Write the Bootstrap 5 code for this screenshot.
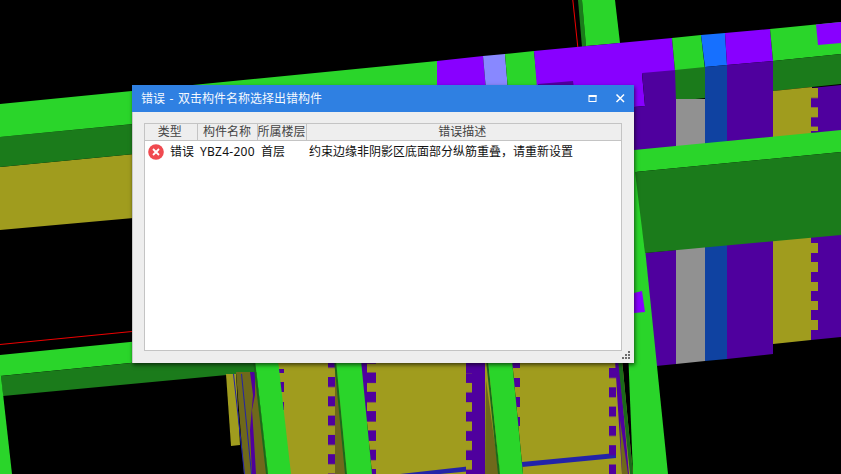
<!DOCTYPE html>
<html lang="zh-CN">

<head>
    <meta charset="UTF-8">
    <meta name="viewport" content="width=device-width, initial-scale=1.0">
    <title>错误</title>
    <link href="https://cdn.jsdelivr.net/npm/bootstrap@5.3.0/dist/css/bootstrap.min.css" rel="stylesheet">
    <style>
        html, body { height: 100%; }
        body { background: #000; overflow: hidden; font-family: "Noto Sans", "Noto Sans CJK SC", sans-serif; font-size: 12px; color: #111; }
        .scene { position: absolute; left: 0; top: 0; }
        .err-window { position: absolute; left: 132px; top: 85px; width: 502px; height: 278px; background: #eee; border-left: 1px solid #c8c8c8; box-shadow: 1px 2px 4px rgba(0,0,0,.6); }
        .err-title { height: 27px; margin-left: -1px; padding: 0 6px 0 9px; background: #2f80e2; color: #f4f8fe; word-spacing: 1.5px; }
        .err-btn { width: 14px; height: 14px; margin-left: 14px; }
        .err-body { padding: 11px 12px 12px 11px; height: 251px; }
        .err-grid { height: 228px; width: 478px; border: 1px solid #c4c4c4; background: #fff; }
        .err-table { table-layout: fixed; width: 100%; margin: 0; --bs-table-bg: transparent; --bs-table-color: #111; }
        .err-table th { height: 16px; padding: 0; background: #eee; color: #444; font-weight: 400; line-height: 16px; text-align: center; border-bottom: 1px solid #c4c4c4; border-right: 1px solid #c4c4c4; white-space: nowrap; overflow: hidden; }
        .err-table th:first-child { padding-right: 2px; }
        .err-table th:last-child { border-right: 0; padding-right: 3px; }
        .err-table td { height: 22px; padding: 0; line-height: 21px; border: 0; white-space: nowrap; }
        .err-type { gap: 6px; }
        .cell-type { padding-left: 3px !important; }
        .cell-name { padding-left: 3px !important; letter-spacing: .25px; }
        .cell-floor { padding-left: 4px !important; }
        .cell-desc { padding-left: 3px !important; }
        .err-grip { position: absolute; right: 3px; bottom: 3px; }
    </style>
</head>

<body>
    <!-- 3D model behind the dialog -->
    <svg class="scene" width="841" height="474" viewBox="0 0 841 474">
        <defs>
            <pattern id="notch-a" x="328" y="377" width="10" height="19.3" patternUnits="userSpaceOnUse"><rect width="10" height="10" fill="#4f009e"/></pattern>
            <pattern id="notch-b" x="367" y="372.5" width="10" height="19.3" patternUnits="userSpaceOnUse"><rect width="10" height="10.5" fill="#4f009e"/></pattern>
            <pattern id="notch-c" x="466" y="363.6" width="10" height="19.3" patternUnits="userSpaceOnUse"><rect width="10" height="9.5" fill="#a09c1e"/></pattern>
            <pattern id="notch-d" x="609" y="368" width="10" height="19.3" patternUnits="userSpaceOnUse"><rect width="10" height="10" fill="#4f009e"/></pattern>
            <pattern id="notch-e" x="811" y="88" width="10" height="19.3" patternUnits="userSpaceOnUse"><rect width="10" height="10" fill="#a09c1e"/></pattern>
        </defs>

        <!-- upper left beam -->
        <polygon fill="#a09c1e" points="0,167 300,138 300,203 0,230"/>
        <polygon fill="#1b7b1b" points="0,137 300,108 300,138 0,167"/>
        <polygon fill="#2ad52a" points="0,104 437,61 440,94 0,137"/>

        <!-- short beam at the top -->
        <polygon fill="#1b7b1b" points="578,0 582,0 586,46 582,47"/>
        <polygon fill="#2ad52a" points="582,0 615,0 620,43 586,46"/>
        <polygon fill="#ee0000" points="572.3,0 573.3,0 578.3,47 577.3,47"/>

        <!-- strip along the top edge -->
        <polygon fill="#8800ff" points="437,61 483,56 486,90 437,90"/>
        <polygon fill="#8888ff" points="483,56 505,54 508,90 486,90"/>
        <polygon fill="#2ad52a" points="505,54 534,51 538,90 508,90"/>
        <polygon fill="#8800ff" points="534,51 672,38 675,71 642,74 645,106 634,107 538,100"/>
        <polygon fill="#2ad52a" points="672,38 701,35 705,70 675,71"/>
        <polygon fill="#1670ff" points="701,35 725,33 727,65 705,67"/>
        <polygon fill="#8800ff" points="725,33 770,29 773,61 727,65"/>
        <polygon fill="#2ad52a" points="770,29 841,22 841,54 773,61"/>
        <polygon fill="#8800ff" points="816,24.5 841,22 841,43 818,45"/>
        <polygon fill="#4f009e" points="538,84 573,81 574,88 539,90"/>

        <!-- right block, upper part -->
        <polygon fill="#4f009e" points="642,73 676,70 676,150 634,150 634,107 645,106"/>
        <polygon fill="#1b7b1b" points="675,70 705,67 705,98 676,101"/>
        <polygon fill="#0f42a1" points="705,67 727,65 727,145 705,145"/>
        <rect x="676" y="99" width="29" height="50" fill="#919191"/>
        <polygon fill="#4f009e" points="727,65 773,61 773,140 727,145"/>
        <polygon fill="#1b7b1b" points="773,61 841,54 841,84 773,91"/>
        <polygon fill="#a09c1e" points="773,91 812,87 811,140 773,140"/>
        <polygon fill="#4f009e" points="811,88 841,85 841,131 811,133"/>
        <rect x="811" y="88" width="7" height="43" fill="url(#notch-e)"/>

        <!-- right block, lower part -->
        <polygon fill="#4f009e" points="645,253 676,250 676,364 656,366"/>
        <polygon fill="#919191" points="676,248 705,245 705,361 676,364"/>
        <polygon fill="#0f42a1" points="705,245 727,243 727,359 705,361"/>
        <polygon fill="#4f009e" points="727,243 773,238 773,354 727,359"/>
        <polygon fill="#a09c1e" points="773,238 811,234 811,340 773,344"/>
        <polygon fill="#4f009e" points="811,234 841,231 841,337 811,340"/>
        <g fill="#a09c1e">
            <rect x="811" y="243" width="7" height="10"/>
            <rect x="811" y="262" width="7" height="10"/>
            <rect x="811" y="282" width="7" height="9"/>
            <rect x="811" y="301" width="7" height="9"/>
            <rect x="811" y="320" width="7" height="10"/>
        </g>

        <!-- long green column on the right -->
        <polygon fill="#2ad52a" points="620,150 635,150 668,474 633,474"/>
        <polygon fill="#8800ff" points="634,293 642,291 645,312 634,313"/>

        <!-- cross beam on the right -->
        <polygon fill="#2ad52a" points="634,150 841,130 841,152 635,172"/>
        <polygon fill="#1b7b1b" points="635,172 841,152 841,235 645,253"/>

        <!-- lower left beam -->
        <polygon fill="#ee0000" points="0,344 132,331 132,332 0,345"/>
        <polygon fill="#2ad52a" points="0,355 140,341 140,362 0,376"/>
        <polygon fill="#1b7b1b" points="1,376 260,350 260,372 3,396"/>
        <polygon fill="#2ad52a" points="0,376 1,376 12,474 0,474"/>

        <!-- columns under the dialog -->
        <polygon fill="#a09c1e" points="226,374 236,374 240,445 231,446"/>
        <polygon fill="#6f691b" points="236,372 256,372 268,474 244,474"/>
        <polygon fill="#2323a8" points="233,374 234,374 245,474 244,474"/>
        <polygon fill="#2323a8" points="241,374 242,374 252,474 251,474"/>
        <polygon fill="#4f009e" points="250,372 255,372 255,395 252,410 254,440 256,474 252,474 250,430 253,395"/>

        <rect x="278" y="360" width="58" height="114" fill="#a09c1e"/>
        <rect x="279" y="369" width="5" height="4" fill="#4f009e"/>
        <rect x="279" y="382" width="5" height="10" fill="#4f009e"/>
        <rect x="279" y="402" width="5" height="8" fill="#4f009e"/>
        <rect x="328" y="360" width="7" height="114" fill="url(#notch-a)"/>
        <polygon fill="#6f691b" points="335,360 340,360 352,474 335,474"/>

        <polygon fill="#a09c1e" points="361,360 490,360 500,474 372,474"/>
        <rect x="361" y="360" width="6" height="114" fill="#4f009e"/>
        <rect x="367" y="360" width="9" height="3" fill="#4f009e"/>
        <rect x="367" y="360" width="9" height="114" fill="url(#notch-b)"/>
        <polygon fill="#2323a8" points="400,474 472,466 472,471 440,474"/>
        <rect x="466" y="360" width="6" height="114" fill="#4f009e"/>
        <rect x="466" y="373" width="6" height="101" fill="url(#notch-c)"/>
        <rect x="472" y="360" width="13" height="114" fill="#4f009e"/>
        <polygon fill="#6f691b" points="486,380 499,474 485,474"/>

        <polygon fill="#a09c1e" points="512,360 622,360 633,474 523,474"/>
        <polygon fill="#2323a8" points="522,462 616,453 616,458 522,467"/>
        <rect x="512" y="360" width="8" height="8" fill="#4f009e"/>
        <rect x="512" y="378" width="8" height="9" fill="#4f009e"/>
        <rect x="514" y="397" width="6" height="10" fill="#4f009e"/>
        <rect x="516" y="417" width="4" height="9" fill="#4f009e"/>
        <polygon fill="#4f009e" points="615,360 619,360 629,474 622,474"/>
        <rect x="609" y="368" width="7" height="106" fill="url(#notch-d)"/>
        <polygon fill="#6f691b" points="620,420 628,474 622,474"/>
        <polygon fill="#1a6a1a" points="618,360 622,360 633,474 630,474"/>

        <polygon fill="#1a6a1a" points="253,360 255,360 268,474 266,474"/>
        <polygon fill="#2ad52a" points="255,360 278,360 291,474 268,474"/>
        <polygon fill="#1a6a1a" points="334,360 336,360 347,474 345,474"/>
        <polygon fill="#2ad52a" points="336,360 361,360 372,474 347,474"/>
        <polygon fill="#1a6a1a" points="486,360 488,360 500,474 498,474"/>
        <polygon fill="#2ad52a" points="488,360 512,360 523,474 500,474"/>
    </svg>

    <!-- Error dialog -->
    <div class="err-window">
        <div class="err-title d-flex align-items-center">
            <span class="flex-grow-1">错误 - 双击构件名称选择出错构件</span>
            <svg class="err-btn" viewBox="0 0 14 14"><rect x="3" y="3.5" width="7" height="6" fill="none" stroke="#fff" stroke-width="1"/><rect x="3" y="3" width="7.5" height="2" fill="#fff"/></svg>
            <svg class="err-btn" viewBox="0 0 14 14"><path d="M2.5 2.5l7.5 7.5M10 2.5l-7.5 7.5" fill="none" stroke="#fff" stroke-width="1.5"/></svg>
        </div>
        <div class="err-body">
            <div class="err-grid">
                <table class="table err-table">
                    <colgroup>
                        <col style="width: 52px">
                        <col style="width: 60px">
                        <col style="width: 49px">
                        <col>
                    </colgroup>
                    <thead>
                        <tr><th>类型</th><th>构件名称</th><th>所属楼层</th><th>错误描述</th></tr>
                    </thead>
                    <tbody>
                        <tr>
                            <td class="cell-type">
                                <div class="d-flex align-items-center err-type">
                                    <svg width="16" height="16" viewBox="0 0 16 16" class="flex-shrink-0"><circle cx="8" cy="8" r="7.8" fill="#f04a50"/><path d="M5 5l6 6M11 5l-6 6" stroke="#fff" stroke-width="1.8" fill="none"/></svg>
                                    <span>错误</span>
                                </div>
                            </td>
                            <td class="cell-name">YBZ4-200</td>
                            <td class="cell-floor">首层</td>
                            <td class="cell-desc">约束边缘非阴影区底面部分纵筋重叠，请重新设置</td>
                        </tr>
                    </tbody>
                </table>
            </div>
        </div>
        <svg class="err-grip" width="9" height="9" viewBox="0 0 9 9" fill="#6d6d6d">
            <rect x="6" y="0" width="2" height="2"/>
            <rect x="3" y="3" width="2" height="2"/><rect x="6" y="3" width="2" height="2"/>
            <rect x="0" y="6" width="2" height="2"/><rect x="3" y="6" width="2" height="2"/><rect x="6" y="6" width="2" height="2"/>
        </svg>
    </div>

    <script src="https://cdn.jsdelivr.net/npm/bootstrap@5.3.0/dist/js/bootstrap.bundle.min.js"></script>
</body>

</html>
